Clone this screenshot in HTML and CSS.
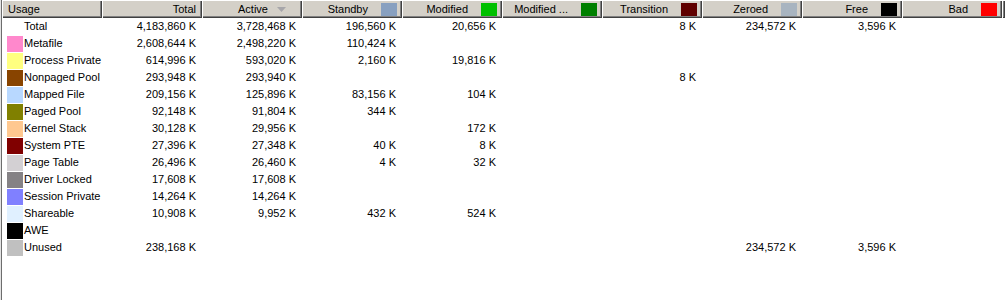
FILE: index.html
```html
<!DOCTYPE html>
<html lang="en">
<head>
    <meta charset="UTF-8">
    <title>Use Counts</title>
    <link rel="stylesheet" href="styles.css">
</head>
<body>
    <div class="frame">
        <table class="list">
            <colgroup>
                <col class="col"><col class="col"><col class="col"><col class="col"><col class="col">
                <col class="col"><col class="col"><col class="col"><col class="col"><col class="col">
                <col>
            </colgroup>
            <thead>
                <tr>
                    <th class="left"><div class="head">Usage</div></th>
                    <th><div class="head">Total</div></th>
                    <th><div class="head sorted">Active<svg class="arrow" width="9" height="5" viewBox="0 0 9 5"><polygon points="0,0 9,0 4.5,5" fill="#a7a6aa"/></svg></div></th>
                    <th><div class="head keyed">Standby<span class="key standby"></span></div></th>
                    <th><div class="head keyed">Modified<span class="key modified"></span></div></th>
                    <th><div class="head keyed">Modified ...<span class="key nowrite"></span></div></th>
                    <th><div class="head keyed">Transition<span class="key transition"></span></div></th>
                    <th><div class="head keyed">Zeroed<span class="key zeroed"></span></div></th>
                    <th><div class="head keyed">Free<span class="key free"></span></div></th>
                    <th><div class="head keyed">Bad<span class="key bad"></span></div></th>
                    <th class="filler"></th>
                </tr>
            </thead>
            <tbody>
                <tr>
                    <td class="name"><div class="item"><span class="swatch"></span>Total</div></td>
                    <td>4,183,860 K</td><td>3,728,468 K</td><td>196,560 K</td><td>20,656 K</td>
                    <td></td><td>8 K</td><td>234,572 K</td><td>3,596 K</td><td></td><td></td>
                </tr>
                <tr>
                    <td class="name"><div class="item"><span class="swatch metafile"></span>Metafile</div></td>
                    <td>2,608,644 K</td><td>2,498,220 K</td><td>110,424 K</td><td></td>
                    <td></td><td></td><td></td><td></td><td></td><td></td>
                </tr>
                <tr>
                    <td class="name"><div class="item"><span class="swatch private"></span>Process Private</div></td>
                    <td>614,996 K</td><td>593,020 K</td><td>2,160 K</td><td>19,816 K</td>
                    <td></td><td></td><td></td><td></td><td></td><td></td>
                </tr>
                <tr>
                    <td class="name"><div class="item"><span class="swatch nonpaged"></span>Nonpaged Pool</div></td>
                    <td>293,948 K</td><td>293,940 K</td><td></td><td></td>
                    <td></td><td>8 K</td><td></td><td></td><td></td><td></td>
                </tr>
                <tr>
                    <td class="name"><div class="item"><span class="swatch mapped"></span>Mapped File</div></td>
                    <td>209,156 K</td><td>125,896 K</td><td>83,156 K</td><td>104 K</td>
                    <td></td><td></td><td></td><td></td><td></td><td></td>
                </tr>
                <tr>
                    <td class="name"><div class="item"><span class="swatch paged"></span>Paged Pool</div></td>
                    <td>92,148 K</td><td>91,804 K</td><td>344 K</td><td></td>
                    <td></td><td></td><td></td><td></td><td></td><td></td>
                </tr>
                <tr>
                    <td class="name"><div class="item"><span class="swatch kstack"></span>Kernel Stack</div></td>
                    <td>30,128 K</td><td>29,956 K</td><td></td><td>172 K</td>
                    <td></td><td></td><td></td><td></td><td></td><td></td>
                </tr>
                <tr>
                    <td class="name"><div class="item"><span class="swatch pte"></span>System PTE</div></td>
                    <td>27,396 K</td><td>27,348 K</td><td>40 K</td><td>8 K</td>
                    <td></td><td></td><td></td><td></td><td></td><td></td>
                </tr>
                <tr>
                    <td class="name"><div class="item"><span class="swatch pagetable"></span>Page Table</div></td>
                    <td>26,496 K</td><td>26,460 K</td><td>4 K</td><td>32 K</td>
                    <td></td><td></td><td></td><td></td><td></td><td></td>
                </tr>
                <tr>
                    <td class="name"><div class="item"><span class="swatch locked"></span>Driver Locked</div></td>
                    <td>17,608 K</td><td>17,608 K</td><td></td><td></td>
                    <td></td><td></td><td></td><td></td><td></td><td></td>
                </tr>
                <tr>
                    <td class="name"><div class="item"><span class="swatch session"></span>Session Private</div></td>
                    <td>14,264 K</td><td>14,264 K</td><td></td><td></td>
                    <td></td><td></td><td></td><td></td><td></td><td></td>
                </tr>
                <tr>
                    <td class="name"><div class="item"><span class="swatch shareable"></span>Shareable</div></td>
                    <td>10,908 K</td><td>9,952 K</td><td>432 K</td><td>524 K</td>
                    <td></td><td></td><td></td><td></td><td></td><td></td>
                </tr>
                <tr>
                    <td class="name"><div class="item"><span class="swatch awe"></span>AWE</div></td>
                    <td></td><td></td><td></td><td></td>
                    <td></td><td></td><td></td><td></td><td></td><td></td>
                </tr>
                <tr>
                    <td class="name"><div class="item"><span class="swatch unused"></span>Unused</div></td>
                    <td>238,168 K</td><td></td><td></td><td></td>
                    <td></td><td></td><td>234,572 K</td><td>3,596 K</td><td></td><td></td>
                </tr>
            </tbody>
        </table>
    </div>
</body>
</html>
```
FILE: styles.css
```css
body {
    margin: 0;
    background-color: #e3e3e3;
    font-family: "Liberation Sans", Arial, sans-serif;
    font-size: 11px;
    color: #000;
}
.frame {
    margin-left: 1px;
    height: 300px;
    border-left: 1px solid #6d6d6d;
    background-color: #fff;
    overflow: hidden;
}
.list {
    width: 1003px;
    table-layout: fixed;
    border-collapse: separate;
    border-spacing: 0;
}
.col {
    width: 100px;
}
th {
    height: 18px;
    padding: 0;
    background-color: #d4d0c8;
    box-shadow: inset 1px 1px 0 #fff, inset -1px -1px 0 #404040, inset -2px -2px 0 #808080;
    font-weight: normal;
    white-space: nowrap;
    overflow: hidden;
}
.head {
    display: flex;
    align-items: center;
    justify-content: flex-end;
    height: 17px;
    padding: 0 6px;
}
th.left .head {
    justify-content: flex-start;
}
.head.keyed {
    padding-right: 5px;
}
.head.sorted {
    padding-right: 16px;
}
.arrow {
    margin-left: 9px;
}
.key {
    width: 16px;
    height: 13px;
    margin-left: 13px;
    margin-top: 1px;
}
td {
    height: 17px;
    padding: 0 6px;
    line-height: 17px;
    text-align: right;
    white-space: nowrap;
    overflow: hidden;
}
td.name {
    padding: 0 0 0 5px;
    text-align: left;
}
.item {
    display: flex;
    align-items: center;
    height: 17px;
}
.swatch {
    flex: none;
    width: 16px;
    height: 16px;
    margin-right: 1px;
}
.swatch.metafile { background-color: #ff88cc; }
.swatch.private { background-color: #ffff80; }
.swatch.nonpaged { background-color: #884400; }
.swatch.mapped { background-color: #b8d8ff; }
.swatch.paged { background-color: #808000; }
.swatch.kstack { background-color: #ffc890; }
.swatch.pte { background-color: #800000; }
.swatch.pagetable { background-color: #d3d0d3; }
.swatch.locked { background-color: #858285; }
.swatch.session { background-color: #8080ff; }
.swatch.shareable { background-color: #e0f0ff; }
.swatch.awe { background-color: #000; }
.swatch.unused { background-color: #c0c0c0; }
.key.standby { background-color: #88a0c0; }
.key.modified { background-color: #00c000; }
.key.nowrite { background-color: #008000; }
.key.transition { background-color: #600000; }
.key.zeroed { background-color: #a8b4c0; }
.key.free { background-color: #000; }
.key.bad { background-color: #f00; }
```
